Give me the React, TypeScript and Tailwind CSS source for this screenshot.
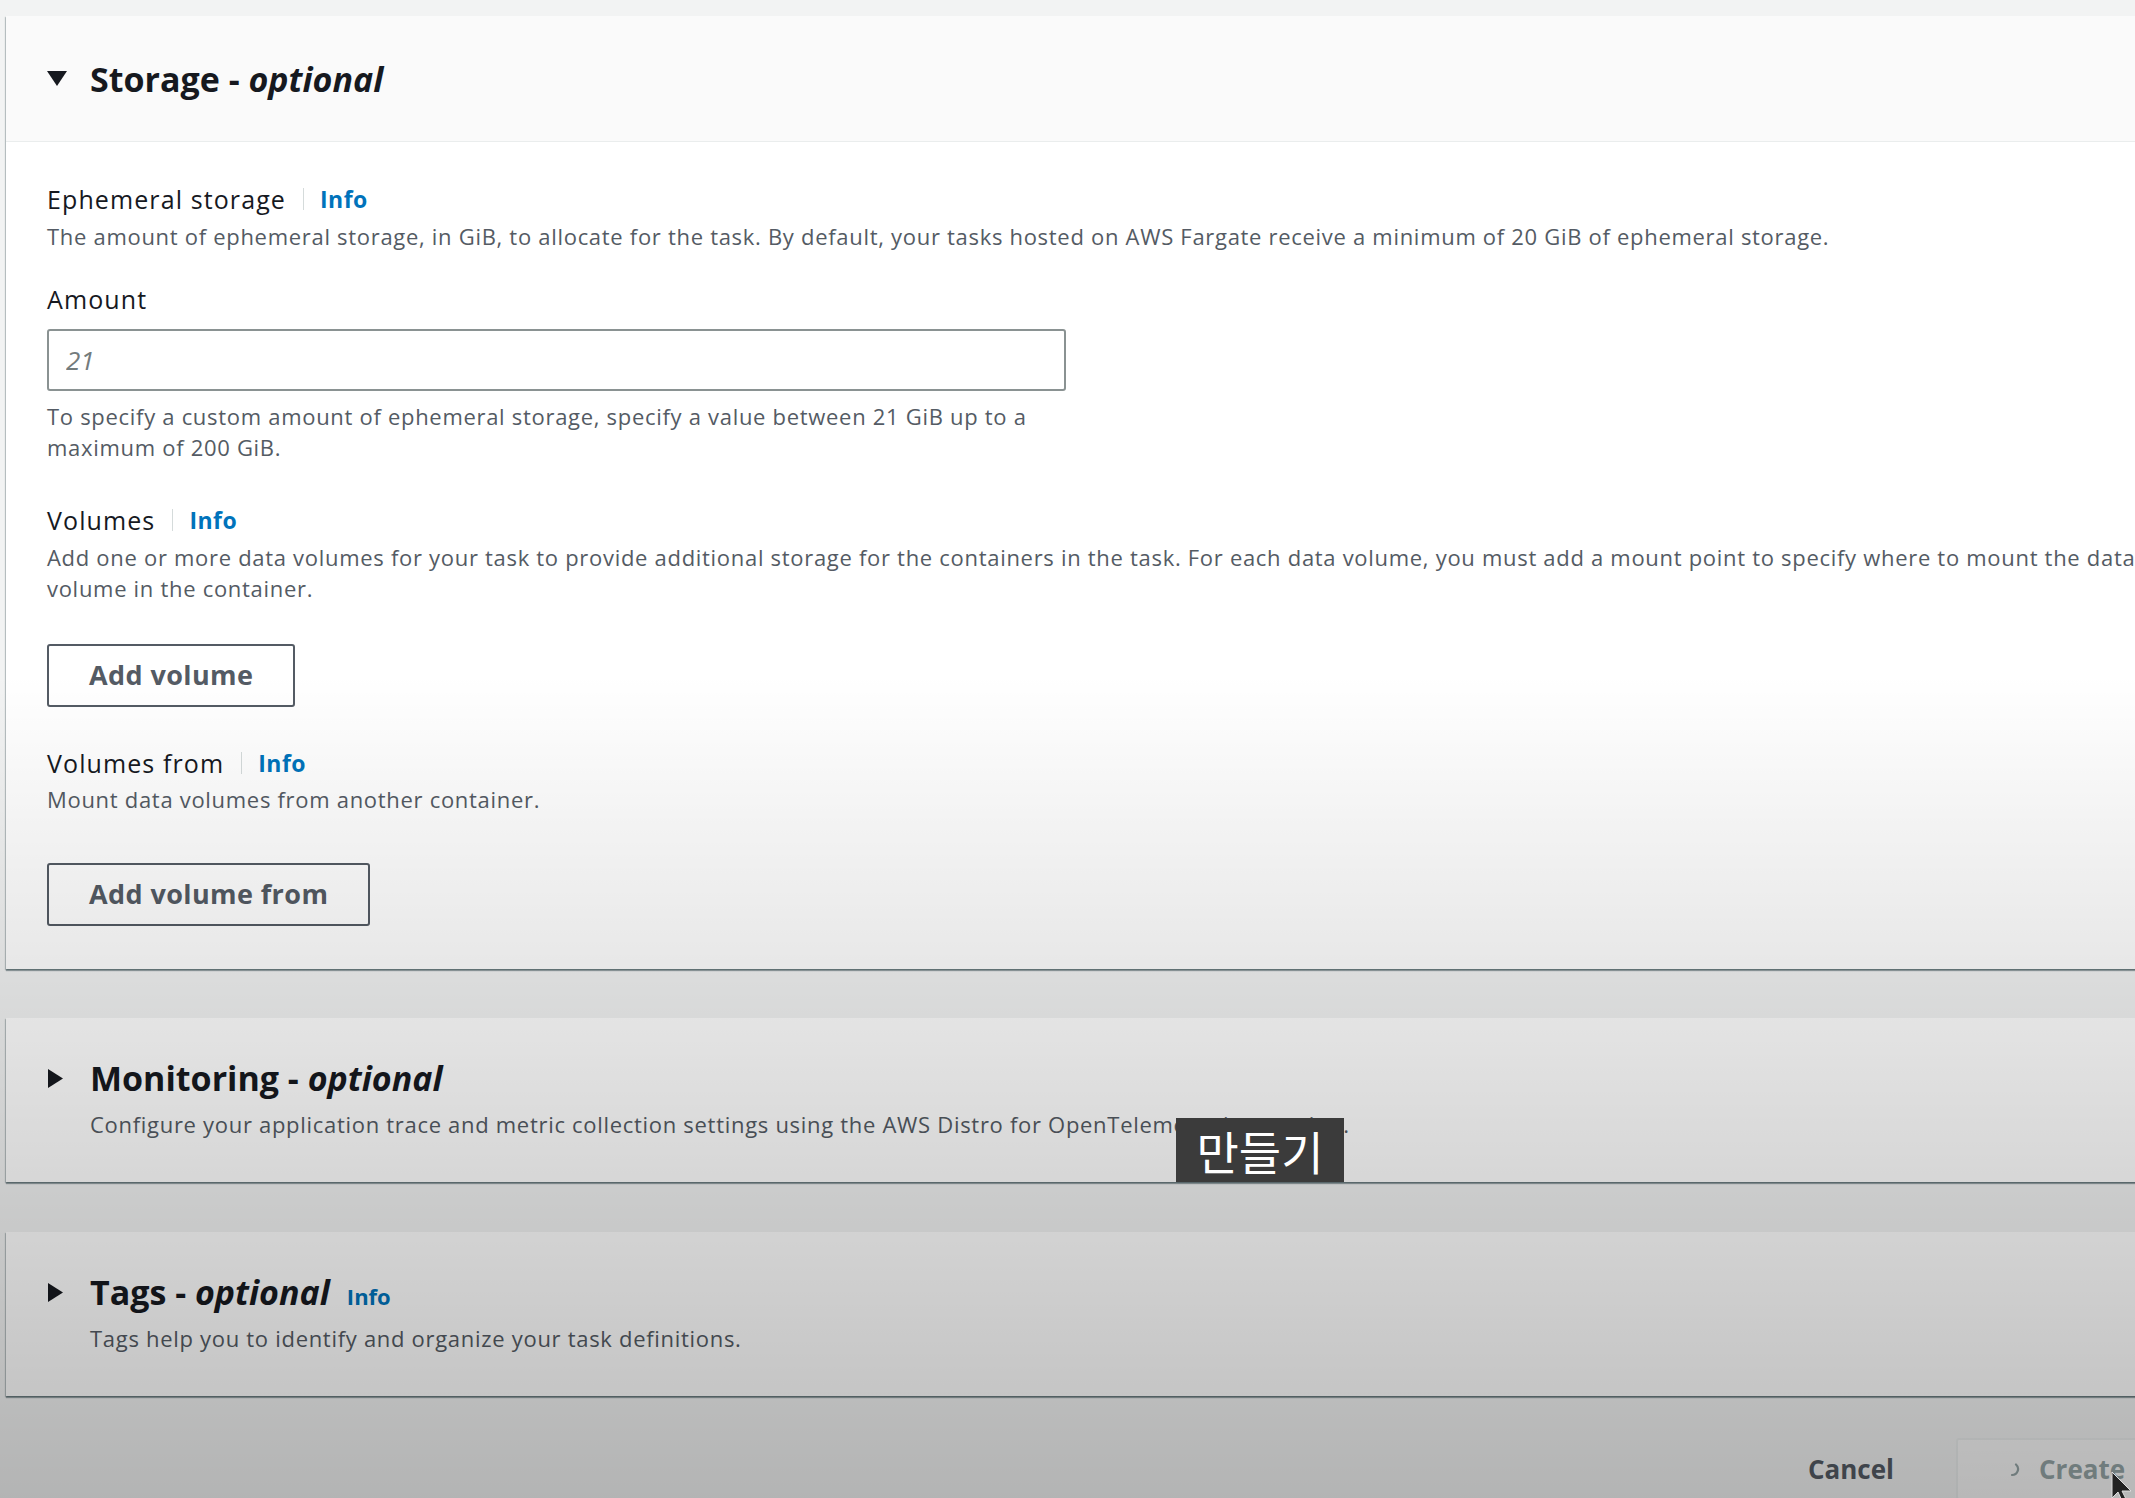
import React from "react";

const Caret = ({ open }: { open?: boolean }) =>
  open ? (
    <svg width="20" height="15" viewBox="0 0 20 15" className="shrink-0">
      <path d="M0 0h20L10 15z" fill="#16191f" />
    </svg>
  ) : (
    <svg width="15" height="19" viewBox="0 0 15 19" className="shrink-0">
      <path d="M0 0l15 9.5L0 19z" fill="#16191f" />
    </svg>
  );

const Title = ({ name, info }: { name: string; info?: boolean }) => (
  <h2 className="flex items-baseline text-[34px] font-bold leading-[44px] text-[#16191f]">
    <span>
      {name} - <i>optional</i>
    </span>
    {info && (
      <a className="ml-[17px] text-[22px] font-bold leading-none text-[#0073bb]">Info</a>
    )}
  </h2>
);

const Label = ({ text, info }: { text: string; info?: boolean }) => (
  <div className="flex items-center text-[25px] leading-[32px] tracking-[1.1px] text-[#16191f]">
    <span>{text}</span>
    {info && (
      <>
        <span className="ml-[17px] mr-[16px] h-[22px] w-px bg-[#d5dbdb]" />
        <a className="text-[23px] font-bold tracking-[0.5px] text-[#0073bb]">Info</a>
      </>
    )}
  </div>
);

const Desc = ({ children, className = "" }: { children: React.ReactNode; className?: string }) => (
  <p className={"text-[22px] tracking-[0.7px] text-[#545b64] " + className}>{children}</p>
);

const OutlineButton = ({ children, className = "" }: { children: React.ReactNode; className?: string }) => (
  <button
    className={
      "flex h-[63px] items-center rounded-[3px] border-2 border-[#545b64] bg-white px-[40px] text-[27px] font-bold tracking-[0.4px] text-[#545b64] " +
      className
    }
  >
    {children}
  </button>
);

const cardShadow =
  "shadow-[0_2px_1px_0_rgba(0,28,36,0.35),-1px_1px_1px_0_rgba(0,28,36,0.2),1px_1px_1px_0_rgba(0,28,36,0.15)]";

const CollapsedCard = ({
  name,
  desc,
  info,
  className = "",
}: {
  name: string;
  desc: string;
  info?: boolean;
  className?: string;
}) => (
  <section className={"flex bg-white pb-[43px] pl-[42px] pt-[38px] " + cardShadow + " " + className}>
    <div className="flex h-[44px] items-center">
      <Caret />
    </div>
    <div className="ml-[27px]">
      <Title name={name} info={info} />
      <Desc className="mt-[9px] leading-[30px]">{desc}</Desc>
    </div>
  </section>
);

export default function App() {
  return (
    <div className="relative h-[1498px] w-[2135px] overflow-hidden bg-[#f2f3f3] font-['Open_Sans',sans-serif] text-[#16191f]">
      <div className="w-[2200px] pl-[6px] pt-[16px]">
        {/* Storage */}
        <section className={"bg-white " + cardShadow}>
          <header className="flex h-[126px] items-center border-b border-[#eaeded] bg-[#fafafa] pl-[41px]">
            <Caret open />
            <div className="ml-[23px]">
              <Title name="Storage" />
            </div>
          </header>
          <div className="pb-[43px] pl-[41px] pt-[41px]">
            <Label text="Ephemeral storage" info />
            <Desc className="mt-[6px] leading-[30px]">
              The amount of ephemeral storage, in GiB, to allocate for the task. By default, your tasks hosted on
              AWS Fargate receive a minimum of 20 GiB of ephemeral storage.
            </Desc>

            <div className="mt-[32px]">
              <Label text="Amount" />
            </div>
            <input
              readOnly
              placeholder="21"
              className="mt-[14px] h-[62px] w-[1019px] rounded-[3px] border-2 border-[#8a9292] bg-white px-[17px] text-[26px] italic outline-none placeholder:text-[#737b7c]"
            />
            <Desc className="mt-[10px] leading-[31px]">
              To specify a custom amount of ephemeral storage, specify a value between 21 GiB up to a
              <br />
              maximum of 200 GiB.
            </Desc>

            <div className="mt-[41px]">
              <Label text="Volumes" info />
            </div>
            <Desc className="mt-[6px] leading-[31px]">
              Add one or more data volumes for your task to provide additional storage for the containers in the
              task. For each data volume, you must add a mount point to specify where to mount the data
              <br />
              volume in the container.
            </Desc>
            <OutlineButton className="mt-[40px]">Add volume</OutlineButton>

            <div className="mt-[40px]">
              <Label text="Volumes from" info />
            </div>
            <Desc className="mt-[5px] leading-[30px]">Mount data volumes from another container.</Desc>
            <OutlineButton className="mt-[49px]">Add volume from</OutlineButton>
          </div>
        </section>

        <CollapsedCard
          className="mt-[49px]"
          name="Monitoring"
          desc="Configure your application trace and metric collection settings using the AWS Distro for OpenTelemetry integration."
        />

        <CollapsedCard
          className="mt-[50px]"
          name="Tags"
          info
          desc="Tags help you to identify and organize your task definitions."
        />

        {/* footer */}
        <div className="mt-[42px] flex items-start pl-[1782px]">
          <button className="flex h-[62px] items-center px-[20px] text-[26px] font-bold text-[#545b64]">Cancel</button>
          <button className="ml-[42px] flex h-[62px] items-center rounded-[3px] border-2 border-[#eaeded] bg-[#f8f8f8] pl-[46px] pr-[40px] text-[26px] font-bold text-[#95a5a6]">
            <svg width="16" height="16" viewBox="0 0 16 16" className="mr-[19px]">
              <path d="M12 3.5 A6 6 0 0 1 8 14" fill="none" stroke="#95a5a6" strokeWidth="2.2" strokeLinecap="round" />
            </svg>
            Create
          </button>
        </div>
      </div>

      {/* video vignette */}
      <div className="pointer-events-none absolute inset-0 bg-[linear-gradient(180deg,rgba(0,0,0,0)_45%,rgba(0,0,0,0.26)_100%)]" />

      {/* subtitle */}
      <div className="absolute left-[1176px] top-[1118px] flex h-[64px] w-[168px] items-center justify-center bg-[#3b3b3b] font-['Noto_Sans_CJK_KR',sans-serif] text-[46px] leading-none text-white">
        만들기
      </div>

      {/* mouse pointer */}
      <svg className="absolute left-[2111px] top-[1471px]" width="22" height="34" viewBox="0 0 22 34">
        <path d="M1 1v26l6-6 5 11 4-2-5-10h9z" fill="#222" stroke="#ddd" strokeWidth="1" />
      </svg>
    </div>
  );
}
